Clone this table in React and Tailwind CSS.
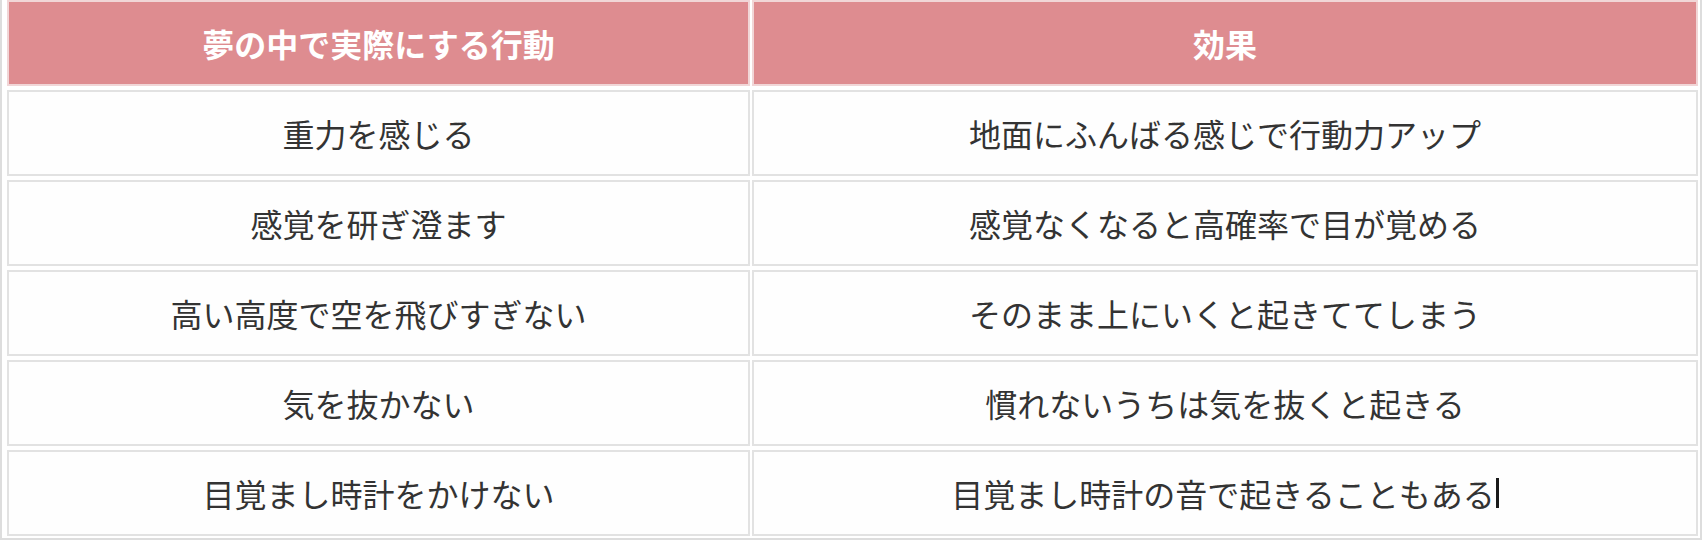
import React from 'react';

const rows = [
  ['重力を感じる', '地面にふんばる感じで行動力アップ'],
  ['感覚を研ぎ澄ます', '感覚なくなると高確率で目が覚める'],
  ['高い高度で空を飛びすぎない', 'そのまま上にいくと起きててしまう'],
  ['気を抜かない', '慣れないうちは気を抜くと起きる'],
  ['目覚まし時計をかけない', '目覚まし時計の音で起きることもある'],
];

const font = { fontFamily: '"Noto Sans CJK JP", "Noto Sans", sans-serif' };

const App = () => {
  return (
    <div className="w-[1704px] h-[540px] overflow-hidden bg-white" style={font}>
      <div className="w-[1702px] border-l-2 border-r-2 border-b-2 border-[#dddddd] pl-[5px] pr-[2px] pb-[2px]">
        <div className="grid grid-cols-[743px_946px] gap-x-[2px] gap-y-[4px]">
          <div className="h-[86px] flex items-center justify-center bg-[#de8c90] border-2 border-[#f1d6d7] text-white font-bold text-[32px]">
            夢の中で実際にする行動
          </div>
          <div className="h-[86px] flex items-center justify-center bg-[#de8c90] border-2 border-[#f1d6d7] text-white font-bold text-[32px]">
            効果
          </div>
          {rows.map(([action, effect], i) => (
            <React.Fragment key={i}>
              <div className="h-[86px] flex items-center justify-center border-2 border-[#e2e2e2] bg-[#fefefe] text-[#333333] text-[32px]">
                {action}
              </div>
              <div className="h-[86px] flex items-center justify-center border-2 border-[#e2e2e2] bg-[#fefefe] text-[#333333] text-[32px]">
                <span className="flex items-center">
                  {effect}
                  {i === rows.length - 1 && (
                    <span className="inline-block w-[3px] h-[30px] bg-[#1a1a1a] ml-[1px]" />
                  )}
                </span>
              </div>
            </React.Fragment>
          ))}
        </div>
      </div>
    </div>
  );
};

export default App;
